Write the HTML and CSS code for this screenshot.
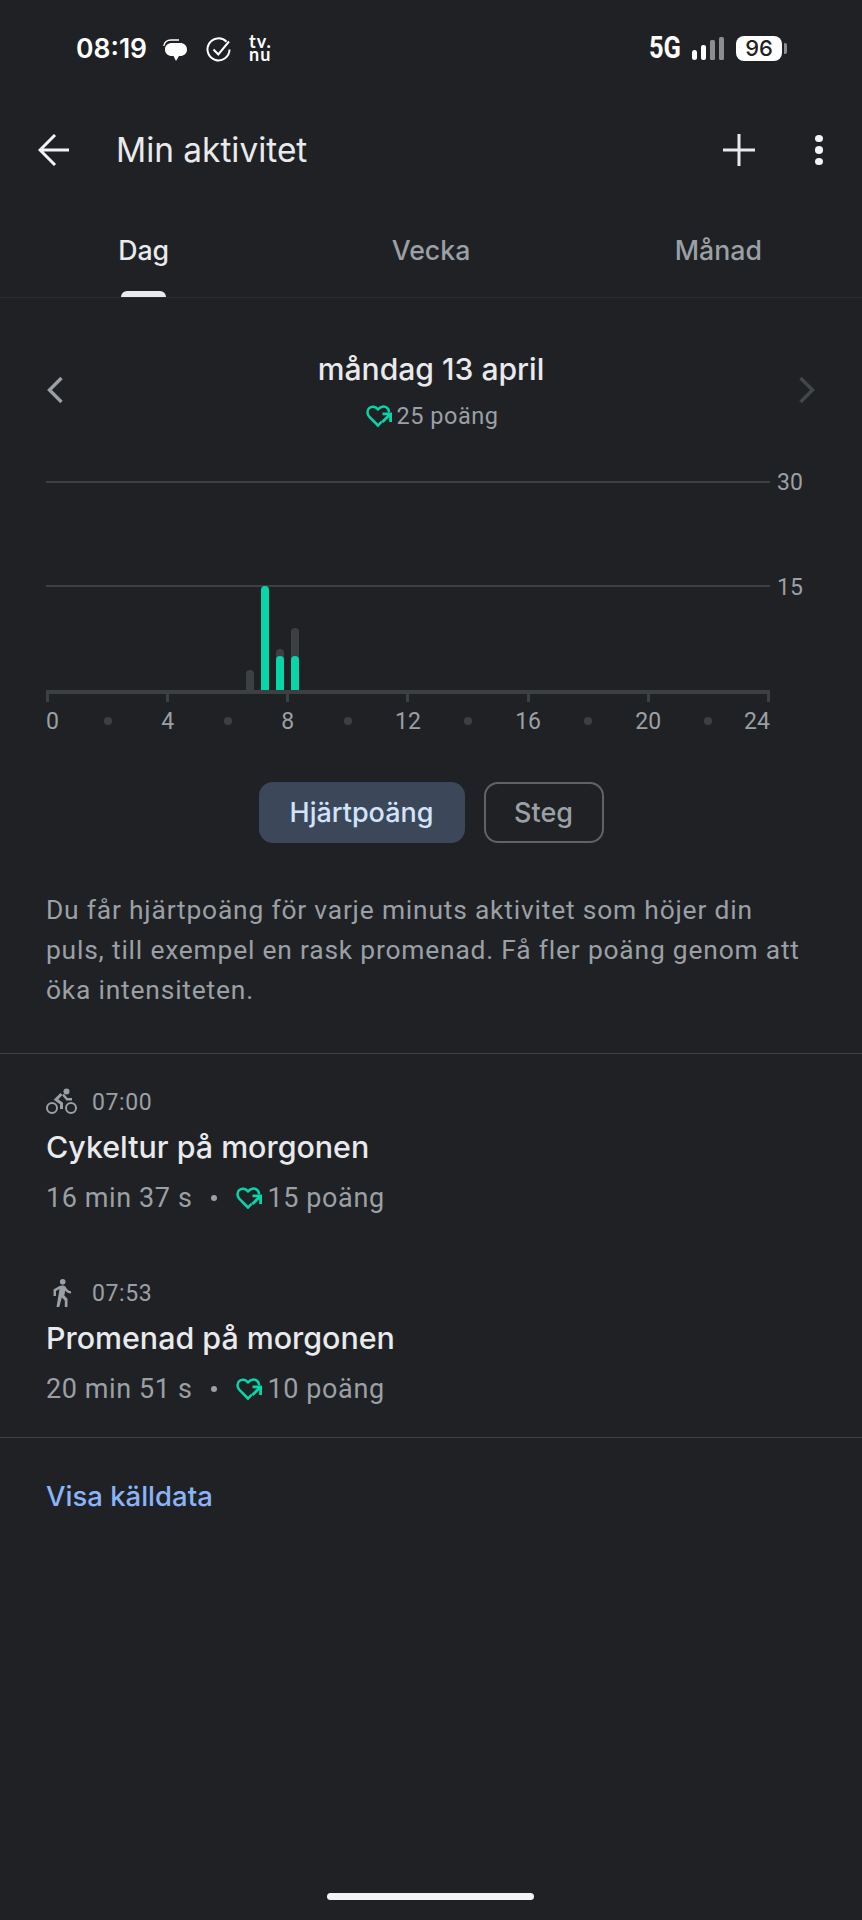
FILE: index.html
```html
<!DOCTYPE html>
<html lang="sv">
<head>
  <meta charset="UTF-8">
  <title>Min aktivitet</title>
  <link rel="stylesheet" href="styles.css">
</head>
<body>
  <svg class="defs" width="0" height="0">
    <symbol id="heart" viewBox="0 0 26 24">
      <path d="M12 21.5 3.2 12.6C.8 10 1 6.2 3.200 4.200 5.800 1.800 9.600 2.300 12 5.400 14.400 2.300 18.600 1.700 21.200 4 22.200 4.900 22.800 6 23 7.300" fill="none" stroke="#06d6a8" stroke-width="2.500" stroke-linecap="round" stroke-linejoin="round"/>
      <path d="M12 21.5 15 18.400" fill="none" stroke="#06d6a8" stroke-width="2.500" stroke-linecap="round"/>
      <path d="M16.500 8.500H26v9.500h-2.800v-4.800l-5.900 5.900-2-2 5.900-5.800h-4.700z" fill="#06d6a8"/>
    </symbol>
  </svg>

  <div class="statusbar">
    <div class="status-left">
      <span class="clock">08:19</span>
      <svg class="chat-icon" width="24" height="22" viewBox="0 0 24 22"><path d="M9 4h8c4 0 7 2.500 7 6.500S21 17 17 17h-1l-3 5-2.500-5H9c-4 0-7-2.500-7-6.500S5 4 9 4z" fill="#fff"/><path d="M.8 7C1.500 3 4.500 1 8 1h8" fill="none" stroke="#fff" stroke-width="1.300"/></svg>
      <svg class="check-icon" width="25" height="25" viewBox="0 0 25 25"><path d="M20.500 4.800A11 11 0 1 0 23.500 12.500" fill="none" stroke="#fff" stroke-width="2"/><path d="M7.500 12.500l4.800 5L23 4.500" fill="none" stroke="#fff" stroke-width="2"/></svg>
      <svg class="tv-logo" width="23" height="24" viewBox="0 0 23 24"><text x="0" y="10">tv.<tspan x="0" y="23">nu</tspan></text></svg>
    </div>
    <div class="status-right">
      <span class="net">5G</span>
      <svg class="signal" width="33" height="23" viewBox="0 0 33 23"><rect x="0" y="13" width="5" height="10" rx="2.500" fill="#fff"/><rect x="9" y="8" width="5" height="15" rx="2" fill="#fff"/><rect x="18" y="3" width="5" height="20" rx="1.500" fill="#8b8d90"/><rect x="27" y="0" width="5" height="23" rx="1.500" fill="#8b8d90"/></svg>
      <span class="battery">96</span>
      <span class="battery-tip"></span>
    </div>
  </div>

  <header class="appbar">
    <svg class="back" width="32" height="32" viewBox="0 0 32 32"><path d="M31 16H3M17 1 2 16l15 15" fill="none" stroke="#f1f3f4" stroke-width="3"/></svg>
    <h1 class="title">Min aktivitet</h1>
    <svg class="plus" width="32" height="32" viewBox="0 0 32 32"><path d="M16 0v32M0 16h32" stroke="#e8eaed" stroke-width="3"/></svg>
    <div class="dots"><i></i><i></i><i></i></div>
  </header>

  <nav class="tabs">
    <div class="tab tab-on">Dag<span class="tab-mark"></span></div>
    <div class="tab">Vecka</div>
    <div class="tab">Månad</div>
  </nav>

  <main>
    <section class="date-row">
      <svg class="chev" width="18" height="28" viewBox="0 0 18 28"><path d="M15.500 2 3.500 14l12 12" fill="none" stroke="#9aa0a6" stroke-width="3.400"/></svg>
      <div class="date-mid">
        <div class="date">måndag 13 april</div>
        <div class="day-points"><svg class="heart" width="26" height="24"><use href="#heart"/></svg>25 poäng</div>
      </div>
      <svg class="chev" width="18" height="28" viewBox="0 0 18 28"><path d="M2.500 2l12 12-12 12" fill="none" stroke="#44474a" stroke-width="3.400"/></svg>
    </section>

    <section class="chart">
      <div class="grid-line line-30"><span>30</span></div>
      <div class="grid-line line-15"><span>15</span></div>
      <div class="bar bar-grey" style="left:200px;height:20px"></div>
      <div class="bar bar-green" style="left:215px;height:104px"></div>
      <div class="bar bar-grey" style="left:230px;height:41px"></div>
      <div class="bar bar-green" style="left:230px;height:34px"></div>
      <div class="bar bar-grey" style="left:245px;height:62px"></div>
      <div class="bar bar-green" style="left:245px;height:34px"></div>
      <div class="axis">
        <div class="tick"><i></i><span class="t-first">0</span></div>
        <div class="dot"></div>
        <div class="tick"><i></i><span>4</span></div>
        <div class="dot"></div>
        <div class="tick"><i></i><span>8</span></div>
        <div class="dot"></div>
        <div class="tick"><i></i><span>12</span></div>
        <div class="dot"></div>
        <div class="tick"><i></i><span>16</span></div>
        <div class="dot"></div>
        <div class="tick"><i></i><span>20</span></div>
        <div class="dot"></div>
        <div class="tick"><i></i><span class="t-last">24</span></div>
      </div>
    </section>

    <div class="toggle">
      <button class="chip chip-on">Hjärtpoäng</button>
      <button class="chip">Steg</button>
    </div>

    <p class="info">Du får hjärtpoäng för varje minuts aktivitet som höjer din puls, till exempel en rask promenad. Få fler poäng genom att öka intensiteten.</p>

    <section class="sessions">
      <div class="session">
        <div class="when">
          <svg width="32" height="28" viewBox="0 0 32 28"><circle cx="20.500" cy="3.500" r="3" fill="#9aa0a6"/><circle cx="6" cy="20" r="5" fill="none" stroke="#9aa0a6" stroke-width="2"/><circle cx="25" cy="20" r="5" fill="none" stroke="#9aa0a6" stroke-width="2"/><path d="M15.500 6 10 11.500l5.500 4V21" fill="none" stroke="#9aa0a6" stroke-width="3"/><path d="M17 6.500l4 4.800h5" fill="none" stroke="#9aa0a6" stroke-width="2.500"/></svg>
          07:00
        </div>
        <h2 class="name">Cykeltur på morgonen</h2>
        <div class="meta">16 min 37 s<span class="sep"></span><svg class="heart" width="26" height="24"><use href="#heart"/></svg>15 poäng</div>
      </div>
      <div class="session">
        <div class="when">
          <svg width="32" height="28" viewBox="0 0 32 28"><circle cx="16.700" cy="2.800" r="2.800" fill="#9aa0a6"/><path d="M13.500 7 7.500 10.500V17H10v-5l3.500-2-3 18h2.800l2.500-9.500 3 3V28h2.700v-8.200l-3.200-3.300 1-5c1.200 2 3.200 3 5.700 3v-2.300c-2 0-3.500-1.200-4.500-2.900l-1-1.600c-1-1.500-3.500-1.700-6-.7z" fill="#9aa0a6"/></svg>
          07:53
        </div>
        <h2 class="name">Promenad på morgonen</h2>
        <div class="meta">20 min 51 s<span class="sep"></span><svg class="heart" width="26" height="24"><use href="#heart"/></svg>10 poäng</div>
      </div>
    </section>

    <a class="source">Visa källdata</a>
  </main>

  <div class="home-pill"></div>
</body>
</html>
```

FILE: styles.css
```css
* {
  box-sizing: border-box;
}
html, body {
  margin: 0;
  height: 1920px;
}
body {
  position: relative;
  width: 862px;
  overflow: hidden;
  background: #202124;
  color: #e8eaed;
  font-family: Roboto, sans-serif;
}
.defs {
  position: absolute;
}
.statusbar {
  height: 123px;
  padding: 35px 75px 0 76px;
  display: flex;
  justify-content: space-between;
}
.status-left, .status-right {
  display: flex;
  align-items: center;
  height: 26px;
}
.clock {
  width: 87px;
  font: 600 26.5px Inter, sans-serif;
  color: #fff;
}
.chat-icon {
  margin: 3px 19px 0 0;
}
.check-icon {
  margin: 3px 18px 0 0;
}
.tv-logo {
  margin-top: 3px;
  overflow: visible;
}
.tv-logo text {
  font: 700 18px Lato, sans-serif;
  letter-spacing: 1px;
  fill: #fff;
}
.net {
  width: 31px;
  margin-right: 12px;
  font: 700 31px/26px Roboto, sans-serif;
  white-space: nowrap;
  color: #fff;
  transform: scaleX(.82);
  transform-origin: left center;
}
.signal {
  margin-right: 11px;
}
.battery {
  width: 46px;
  height: 25px;
  border-radius: 8px;
  background: #fff;
  color: #202124;
  font: 500 22px/25px Inter, sans-serif;
  text-align: center;
}
.battery-tip {
  width: 3px;
  height: 11px;
  margin-left: 2px;
  background: #8b8d90;
  border-radius: 0 2px 2px 0;
}
.appbar {
  height: 54px;
  padding: 0 39px 0 38px;
  display: flex;
  align-items: center;
}
.back {
  margin-right: 46px;
}
.title {
  flex: 1;
  margin: 0;
  font: 400 33.4px Inter, sans-serif;
  color: #e8eaed;
}
.dots {
  margin-left: 60px;
  display: flex;
  flex-direction: column;
  gap: 4px;
}
.dots i {
  width: 8px;
  height: 7.5px;
  border-radius: 50%;
  background: #f1f3f4;
}
.tabs {
  height: 121px;
  display: grid;
  grid-template-columns: 1fr 1fr 1fr;
  border-bottom: 1px solid #2b2c2f;
}
.tab {
  position: relative;
  height: 120px;
  padding-top: 54px;
  text-align: center;
  font: 500 26.7px/38px Inter, sans-serif;
  color: #9aa0a6;
}
.tab-on {
  color: #e8eaed;
}
.tab-mark {
  position: absolute;
  left: 50%;
  bottom: 0;
  width: 45px;
  height: 6px;
  margin-left: -23px;
  border-radius: 6px 6px 0 0;
  background: #e8eaed;
}
.date-row {
  display: flex;
  justify-content: space-between;
  align-items: center;
  padding: 0 46px;
  margin-top: 51px;
}
.chev {
  margin-bottom: 3px;
}
.date-mid {
  text-align: center;
}
.date {
  font: 500 30.1px/40px Inter, sans-serif;
  color: #e8eaed;
}
.day-points {
  display: flex;
  justify-content: center;
  align-items: center;
  gap: 5px;
  margin-top: 10px;
  padding-left: 2px;
  font-size: 23.5px;
  line-height: 34px;
  letter-spacing: .5px;
  color: #9aa0a6;
}
.chart {
  position: relative;
  height: 270px;
  margin: 27px 46px 0;
}
.grid-line {
  position: absolute;
  left: 0;
  width: 724px;
  height: 2px;
  background: #3c4043;
}
.line-30 {
  top: 21px;
}
.line-15 {
  top: 125px;
}
.grid-line span {
  position: absolute;
  left: 731px;
  top: -12px;
  font-size: 23px;
  line-height: 28px;
  color: #9aa0a6;
}
.line-15 span {
  top: -11px;
}
.bar {
  position: absolute;
  bottom: 40px;
  width: 8px;
  border-radius: 4px 4px 0 0;
}
.bar-grey {
  background: #3c4043;
}
.bar-green {
  background: #06d6a8;
}
.axis {
  position: absolute;
  left: 0;
  top: 230px;
  width: 724px;
  height: 4px;
  background: #3c4043;
  display: flex;
  justify-content: space-between;
}
.tick {
  position: relative;
  width: 3px;
}
.tick i {
  display: block;
  width: 3px;
  height: 12px;
  background: #3c4043;
}
.tick span {
  position: absolute;
  left: 50%;
  top: 18px;
  transform: translateX(-50%);
  font-size: 23px;
  line-height: 28px;
  color: #9aa0a6;
}
.tick .t-first {
  left: 0;
  transform: none;
}
.tick .t-last {
  left: auto;
  right: 0;
  transform: none;
}
.dot {
  width: 8px;
  height: 8px;
  margin-top: 27px;
  border-radius: 50%;
  background: #3c4043;
}
.toggle {
  display: flex;
  justify-content: center;
  gap: 19px;
  margin-top: 52px;
}
.chip {
  width: 120px;
  height: 61px;
  padding: 0;
  border: 2px solid #5f6368;
  border-radius: 14px;
  background: none;
  color: #9aa0a6;
  font: 500 27px Inter, sans-serif;
}
.chip-on {
  width: 206px;
  border: 0;
  background: #3c4859;
  color: #d2e3fc;
}
.info {
  margin: 47px 46px 0;
  width: 760px;
  font-size: 26.4px;
  line-height: 40px;
  letter-spacing: .8px;
  color: #9aa0a6;
}
.sessions {
  margin-top: 43px;
  padding: 32px 46px 30px;
  border-top: 1px solid #3c4043;
  border-bottom: 1px solid #3c4043;
}
.session + .session {
  margin-top: 61px;
}
.when {
  display: flex;
  align-items: center;
  gap: 14px;
  height: 32px;
  font-size: 23px;
  letter-spacing: .6px;
  color: #9aa0a6;
}
.name {
  margin: 8px 0 0;
  font: 500 30.4px/42px Inter, sans-serif;
  color: #e8eaed;
}
.meta {
  display: flex;
  align-items: center;
  margin-top: 12px;
  font-size: 27px;
  line-height: 36px;
  letter-spacing: .6px;
  color: #9aa0a6;
}
.sep {
  width: 6px;
  height: 6px;
  margin: 0 19px;
  border-radius: 50%;
  background: #9aa0a6;
}
.meta .heart {
  margin-right: 5px;
}
.source {
  display: block;
  margin: 40px 46px 0;
  font: 500 27.5px/36px Inter, sans-serif;
  color: #8ab4f8;
}
.home-pill {
  position: absolute;
  left: 327px;
  top: 1893px;
  width: 207px;
  height: 7px;
  border-radius: 4px;
  background: #f1f3f4;
}
```
